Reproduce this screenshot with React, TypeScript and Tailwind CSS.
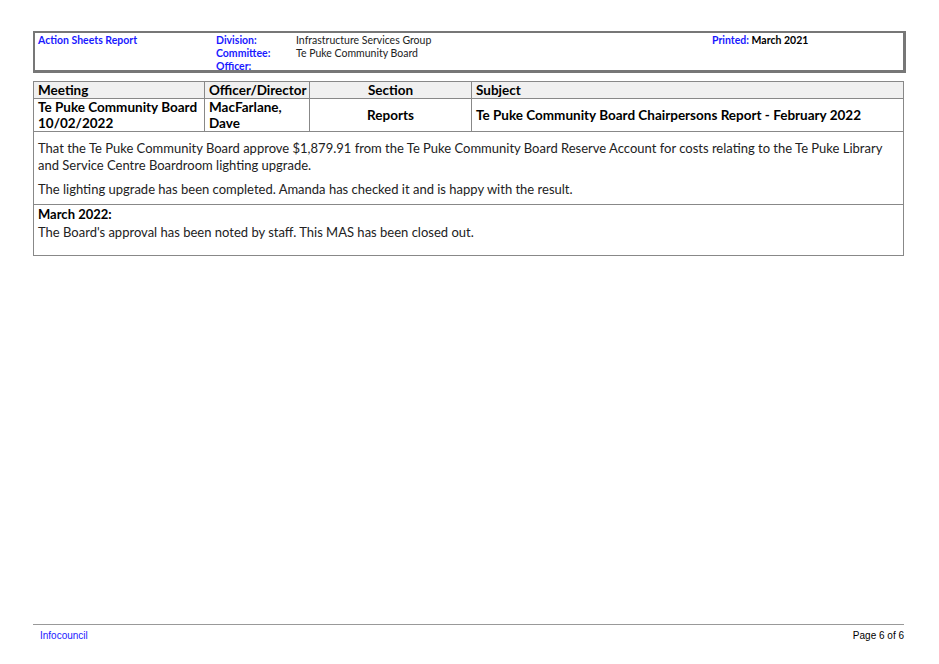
export default function App() {
  const f = { fontFamily: 'Lato, "Liberation Sans", sans-serif' };
  return (
    <div className="relative w-[939px] h-[664px] bg-white text-black" style={f}>
      <div className="pt-[31px] pl-[33px] w-[906px]">
        <div className="flex h-[42px] border-2 border-[#777] border-r-[3px] border-b-[3px] text-[10.5px] leading-[13px] pt-[1px]">
          <div className="w-[181px] pl-[3px] font-bold text-[#1a1aff]">Action Sheets Report</div>
          <div className="w-[80px] font-bold text-[#1a1aff] flex flex-col">
            <span>Division:</span><span>Committee:</span><span>Officer:</span>
          </div>
          <div className="w-[210px] flex flex-col text-[#222]">
            <span>Infrastructure Services Group</span><span>Te Puke Community Board</span>
          </div>
          <div className="flex-1 pl-[206px] font-bold whitespace-nowrap">
            <span className="text-[#1a1aff]">Printed:</span> March 2021
          </div>
        </div>
        <div className="mt-[8px] w-[871px] border border-[#888] text-[13.5px]">
          <div className="grid grid-cols-[171px_105px_162px_1fr] bg-[#f0f0f0] font-bold h-[17px] leading-[16px] border-b border-[#888] whitespace-nowrap">
            <div className="pl-[4px] border-r border-[#888]">Meeting</div>
            <div className="pl-[4px] border-r border-[#888]">Officer/Director</div>
            <div className="text-center border-r border-[#888]">Section</div>
            <div className="pl-[4px]">Subject</div>
          </div>
          <div className="grid grid-cols-[171px_105px_162px_1fr] font-bold h-[33px] leading-[16px] border-b border-[#888] whitespace-nowrap">
            <div className="pl-[4px] border-r border-[#888]">Te Puke Community Board<br />10/02/2022</div>
            <div className="pl-[4px] border-r border-[#888]">MacFarlane,<br />Dave</div>
            <div className="flex items-center justify-center border-r border-[#888]">Reports</div>
            <div className="pl-[4px] flex items-center">Te Puke Community Board Chairpersons Report - February 2022</div>
          </div>
          <div className="h-[73px] px-[4px] pt-[8px] leading-[17px] text-[13px] text-[#222] border-b border-[#888]">
            <p>That the Te Puke Community Board approve $1,879.91 from the Te Puke Community Board Reserve Account for costs relating to the Te Puke Library and Service Centre Boardroom lighting upgrade.</p>
            <p className="mt-[7px]">The lighting upgrade has been completed. Amanda has checked it and is happy with the result.</p>
          </div>
          <div className="h-[50px] px-[4px] pt-[1px] leading-[17px] text-[13px] text-[#222]">
            <p className="font-bold text-black">March 2022:</p>
            <p className="mt-[1px]">The Board's approval has been noted by staff. This MAS has been closed out.</p>
          </div>
        </div>
      </div>
      <div className="absolute left-[33px] top-[624px] w-[871px] border-t border-[#999] flex justify-between pt-[3px] text-[10px]" style={{ fontFamily: '"Liberation Sans", Arial, sans-serif' }}>
        <span className="pl-[7px] text-[#1a1aff]">Infocouncil</span>
        <span>Page 6 of 6</span>
      </div>
    </div>
  );
}
